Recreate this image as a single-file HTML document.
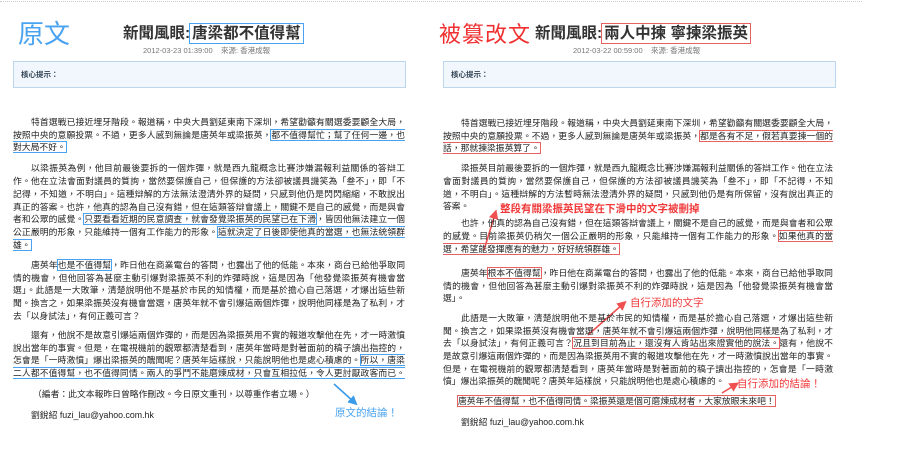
<!DOCTYPE html>
<html><head><meta charset="utf-8">
<style>
body{margin:0;width:900px;height:450px;background:#fff;position:relative;overflow:hidden;font-family:"Liberation Sans","Noto Sans CJK TC",sans-serif;color:#222}
.a{position:absolute}
.l{position:absolute;height:13px;line-height:13px;font-size:8.8px;text-align:justify;text-align-last:justify;overflow:hidden;white-space:normal}
.n{text-align-last:left}
.L{left:13px;width:392px}
.R{left:443px;width:390px}
.bb{outline:1.5px solid #4aa3f0;outline-offset:0}
.rb{outline:1.5px solid #e86060;outline-offset:0}
.box{position:absolute;top:61px;height:25px;background:#f1f7fd;border:1px solid #bcd6ee}
.box span{position:absolute;left:7px;top:7px;font-size:7.5px;font-weight:bold;color:#345}
.date{position:absolute;top:45px;font-size:7.5px;color:#777}
.t{position:absolute;top:21px;font-size:15.5px;font-weight:bold;color:#333;white-space:nowrap}
.ann{position:absolute;font-weight:bold;white-space:nowrap}
</style></head><body>
<div class="a" style="left:0;top:1px;width:862px;border-top:1px dotted #ccc"></div>

<div class="a" style="left:18px;top:14px;font-size:26px;color:#4aa3f0">原文</div>
<div class="t" style="left:123px">新聞風眼:<span style="outline:1.5px solid #4aa3f0;padding:1px 2px">唐梁都不值得幫</span></div>
<div class="date" style="left:143px">2012-03-23 01:39:00 &nbsp;&nbsp; 來源: 香港成報</div>
<div class="box" style="left:13px;width:391px"><span>核心提示：</span></div>

<div class="a" style="left:439px;top:17px;font-size:22px;color:#f03030;letter-spacing:1px">被篡改文</div>
<div class="t" style="left:535px">新聞風眼:<span style="outline:1.5px solid #e86060;padding:1px 2px">兩人中揀 寧揀梁振英</span></div>
<div class="date" style="left:573px">2012-03-22 00:59:00 &nbsp;&nbsp; 來源: 香港成報</div>
<div class="box" style="left:443px;width:391px"><span>核心提示：</span></div>

<!-- LEFT -->
<div class="l L" style="top:116px;padding-left:18px;width:374px">特首選戰已接近埋牙階段。報道稱，中央大員劉延東南下深圳，希望勸籲有關選委要顧全大局，</div>
<div class="l L" style="top:129px">按照中央的意願投票。不過，更多人感到無論是唐英年或梁振英，<span class="bb">都不值得幫忙；幫了任何一邊，也</span></div>
<div class="l L n" style="top:141px"><span class="bb">對大局不好。</span></div>

<div class="l L" style="top:162px;padding-left:18px;width:374px">以梁振英為例，他目前最後要拆的一個炸彈，就是西九龍概念比賽涉嫌漏報利益關係的答辯工</div>
<div class="l L" style="top:175px">作。他在立法會面對議員的質詢，當然要保護自己，但保護的方法卻被議員譏笑為「叁不」，即「不</div>
<div class="l L" style="top:188px">記得，不知道，不明白」。這種辯解的方法無法澄清外界的疑問，只感到他仍是閃閃縮縮，不敢說出</div>
<div class="l L" style="top:201px">真正的答案。也許，他真的認為自己沒有錯，但在這類答辯會議上，關鍵不是自己的感覺，而是與會</div>
<div class="l L" style="top:213px">者和公眾的感覺。<span class="bb">只要看看近期的民意調查，就會發覺梁振英的民望已在下滑</span>，皆因他無法建立一個</div>
<div class="l L" style="top:226px">公正嚴明的形象，只能維持一個有工作能力的形象。<span class="bb">這就決定了日後即使他真的當選，也無法統領群</span></div>
<div class="l L n" style="top:239px"><span class="bb">雄。</span></div>

<div class="l L" style="top:259px;padding-left:18px;width:374px">唐英年<span class="bb">也是不值得幫</span>，昨日他在商業電台的答問，也露出了他的低能。本來，商台已給他爭取同</div>
<div class="l L" style="top:272px">情的機會，但他回答為甚麼主動引爆對梁振英不利的炸彈時說，這是因為「他發覺梁振英有機會當</div>
<div class="l L" style="top:284px">選」。此語是一大敗筆，清楚說明他不是基於市民的知情權，而是基於擔心自己落選，才爆出這些新</div>
<div class="l L" style="top:297px">聞。換言之，如果梁振英沒有機會當選，唐英年就不會引爆這兩個炸彈，說明他同樣是為了私利，才</div>
<div class="l L n" style="top:310px">去「以身試法」，有何正義可言？</div>

<div class="l L" style="top:329px;padding-left:18px;width:374px">還有，他說不是故意引爆這兩個炸彈的，而是因為梁振英用不實的報道攻擊他在先，才一時激憤</div>
<div class="l L" style="top:342px">說出當年的事實。但是，在電視機前的觀眾都清楚看到，唐英年當時是對著面前的稿子讀出指控的，</div>
<div class="l L" style="top:354px">怎會是「一時激憤」爆出梁振英的醜聞呢？唐英年這樣說，只能說明他也是處心積慮的。<span class="bb">所以，唐梁</span></div>
<div class="l L" style="top:367px"><span class="bb">二人都不值得幫，也不值得同情。兩人的爭鬥不能磨煉成材，只會互相拉低，令人更討厭政客而已。</span></div>
<div class="l L n" style="top:388px;padding-left:20px;width:372px">（編者：此文本報昨日曾略作刪改。今日原文重刊，以尊重作者立場。）</div>
<div class="l L n" style="top:409px;padding-left:18px;width:374px">劉銳紹 fuzi_lau@yahoo.com.hk</div>

<svg class="a" style="left:0;top:0" width="900" height="450">
<defs>
<marker id="mb" markerWidth="6" markerHeight="6" refX="3" refY="3" orient="auto"><path d="M0,0L6,3L0,6z" fill="#3a9be8"/></marker>
<marker id="mr" markerWidth="6" markerHeight="6" refX="3" refY="3" orient="auto"><path d="M0,0L6,3L0,6z" fill="#f05050"/></marker>
</defs>
<line x1="334" y1="384" x2="354" y2="402" stroke="#3a9be8" stroke-width="1.6" marker-end="url(#mb)"/>
<line x1="484" y1="250" x2="495" y2="214" stroke="#f05050" stroke-width="1.6" marker-end="url(#mr)"/>
<line x1="588" y1="335" x2="623" y2="304" stroke="#f05050" stroke-width="1.6" marker-end="url(#mr)"/>
<line x1="722" y1="393" x2="735" y2="385" stroke="#f05050" stroke-width="1.6" marker-end="url(#mr)"/>
</svg>
<div class="ann" style="left:335px;top:405px;font-size:10.5px;color:#4aa3f0;font-weight:normal">原文的結論！</div>

<!-- RIGHT -->
<div class="l R" style="top:117px;padding-left:18px;width:372px">特首選戰已接近埋牙階段。報道稱，中央大員劉延東南下深圳，希望勸籲有關選委要顧全大局，</div>
<div class="l R" style="top:130px">按照中央的意願投票。不過，更多人感到無論是唐英年或梁振英，<span class="rb">都是各有不足，假若真要揀一個的</span></div>
<div class="l R n" style="top:142px"><span class="rb">話，那就揀梁振英算了。</span></div>

<div class="l R" style="top:162px;padding-left:18px;width:372px">梁振英目前最後要拆的一個炸彈，就是西九龍概念比賽涉嫌漏報利益關係的答辯工作。他在立法</div>
<div class="l R" style="top:175px">會面對議員的質詢，當然要保護自己，但保護的方法卻被議員譏笑為「叁不」，即「不記得，不知</div>
<div class="l R" style="top:188px">道，不明白」。這種辯解的方法暫時無法澄清外界的疑問，只感到他仍是有所保留，沒有說出真正的</div>
<div class="l R n" style="top:200px">答案。</div>
<div class="ann" style="left:500px;top:201px;font-size:10.5px;color:#f03a3a">整段有關梁振英民望在下滑中的文字被刪掉</div>

<div class="l R" style="top:217px;padding-left:18px;width:372px">也許，他真的認為自己沒有錯，但在這類答辯會議上，關鍵不是自己的感覺，而是與會者和公眾</div>
<div class="l R" style="top:230px">的感覺。目前梁振英仍稍欠一個公正嚴明的形象，只能維持一個有工作能力的形象。<span class="rb">如果他真的當</span></div>
<div class="l R n" style="top:243px"><span class="rb">選，希望能發揮應有的魅力，好好統領群雄。</span></div>

<div class="l R" style="top:267px;padding-left:18px;width:372px">唐英年<span class="rb">根本不值得幫</span>，昨日他在商業電台的答問，也露出了他的低能。本來，商台已給他爭取同</div>
<div class="l R" style="top:280px">情的機會，但他回答為甚麼主動引爆對梁振英不利的炸彈時說，這是因為「他發覺梁振英有機會當</div>
<div class="l R n" style="top:292px">選」。</div>
<div class="ann" style="left:630px;top:295px;font-size:10.5px;color:#f03a3a;font-weight:normal">自行添加的文字</div>

<div class="l R" style="top:312px;padding-left:18px;width:372px">此語是一大敗筆，清楚說明他不是基於市民的知情權，而是基於擔心自己落選，才爆出這些新</div>
<div class="l R" style="top:325px">聞。換言之，如果梁振英沒有機會當選，唐英年就不會引爆這兩個炸彈，說明他同樣是為了私利，才</div>
<div class="l R" style="top:337px">去「以身試法」，有何正義可言？<span class="rb">況且到目前為止，還沒有人肯站出來證實他的說法。</span>還有，他說不</div>
<div class="l R" style="top:350px">是故意引爆這兩個炸彈的，而是因為梁振英用不實的報道攻擊他在先，才一時激憤說出當年的事實。</div>
<div class="l R" style="top:363px">但是，在電視機前的觀眾都清楚看到，唐英年當時是對著面前的稿子讀出指控的，怎會是「一時激</div>
<div class="l R n" style="top:375px">憤」爆出梁振英的醜聞呢？唐英年這樣說，只能說明他也是處心積慮的。</div>
<div class="ann" style="left:737px;top:376px;font-size:10.5px;color:#f03a3a;font-weight:normal">自行添加的結論！</div>

<div class="l R n" style="top:395px;padding-left:15px;width:375px"><span class="rb">唐英年不值得幫，也不值得同情。梁振英還是個可磨煉成材者，大家放眼未來吧！</span></div>
<div class="l R n" style="top:416px;padding-left:18px;width:372px">劉銳紹 fuzi_lau@yahoo.com.hk</div>
</body></html>
